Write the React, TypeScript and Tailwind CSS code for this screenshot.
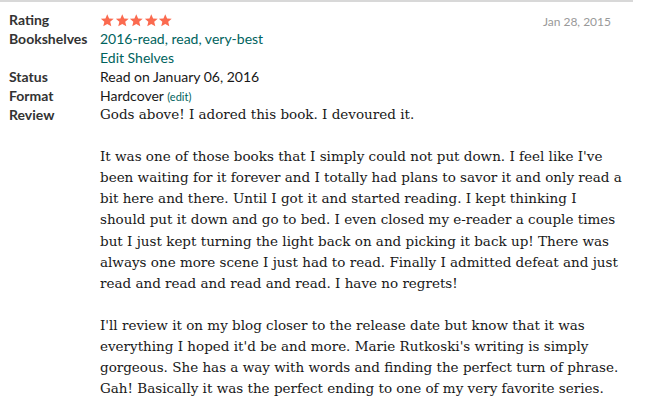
import React from 'react'

const Star = () => (
  <svg viewBox="0 0 24 24" className="h-[15px] w-[14.5px]" fill="#fb6a4f">
    <path d="M12 1.5l3.1 7.1 7.6.6-5.8 5 1.8 7.5L12 17.7l-6.6 4 1.8-7.5-5.8-5 7.6-.6z" />
  </svg>
)

const secondPara = [
  "It was one of those books that I simply could not put down. I feel like I've",
  'been waiting for it forever and I totally had plans to savor it and only read a',
  'bit here and there. Until I got it and started reading. I kept thinking I',
  'should put it down and go to bed. I even closed my e-reader a couple times',
  'but I just kept turning the light back on and picking it back up! There was',
  'always one more scene I just had to read. Finally I admitted defeat and just',
  'read and read and read and read. I have no regrets!',
]

const thirdPara = [
  "I'll review it on my blog closer to the release date but know that it was",
  "everything I hoped it'd be and more. Marie Rutkoski's writing is simply",
  'gorgeous. She has a way with words and finding the perfect turn of phrase.',
  'Gah! Basically it was the perfect ending to one of my very favorite series.',
]

const Label = ({ children }: { children: React.ReactNode }) => (
  <div className="w-[91px] shrink-0 font-bold text-[#333333]">{children}</div>
)

export default function App() {
  return (
    <div className="h-[401px] w-[649px] bg-white font-['Lato','Liberation_Sans',sans-serif]">
      <div className="w-[633px] border-t-2 border-[#d8d8d8]" />
      <div className="relative pl-[9px] pt-[8px] text-[14px] leading-[19px] text-[#181818]">
        <div className="absolute right-[38px] top-[10px] text-[12px] text-[#999999]">Jan 28, 2015</div>
        <div className="flex">
          <Label>Rating</Label>
          <div className="flex items-center pt-[2px]">
            <Star />
            <Star />
            <Star />
            <Star />
            <Star />
          </div>
        </div>
        <div className="flex">
          <Label>Bookshelves</Label>
          <div className="text-[#00635d]">
            <div>2016-read, read, very-best</div>
            <div>Edit Shelves</div>
          </div>
        </div>
        <div className="flex">
          <Label>Status</Label>
          <div>Read on January 06, 2016</div>
        </div>
        <div className="flex">
          <Label>Format</Label>
          <div>
            Hardcover <span className="text-[11px] text-[#00635d]">(edit)</span>
          </div>
        </div>
        <div className="-mt-[2px] flex leading-[21.1px]">
          <Label>Review</Label>
          <div className="w-[545px] whitespace-nowrap font-['DejaVu_Serif',serif] text-[13.5px] text-[#181818]">
            <p>Gods above! I adored this book. I devoured it.</p>
            <br />
            <p>
              {secondPara.map((line) => (
                <span key={line} className="block">
                  {line}
                </span>
              ))}
            </p>
            <br />
            <p>
              {thirdPara.map((line) => (
                <span key={line} className="block">
                  {line}
                </span>
              ))}
            </p>
          </div>
        </div>
      </div>
    </div>
  )
}
